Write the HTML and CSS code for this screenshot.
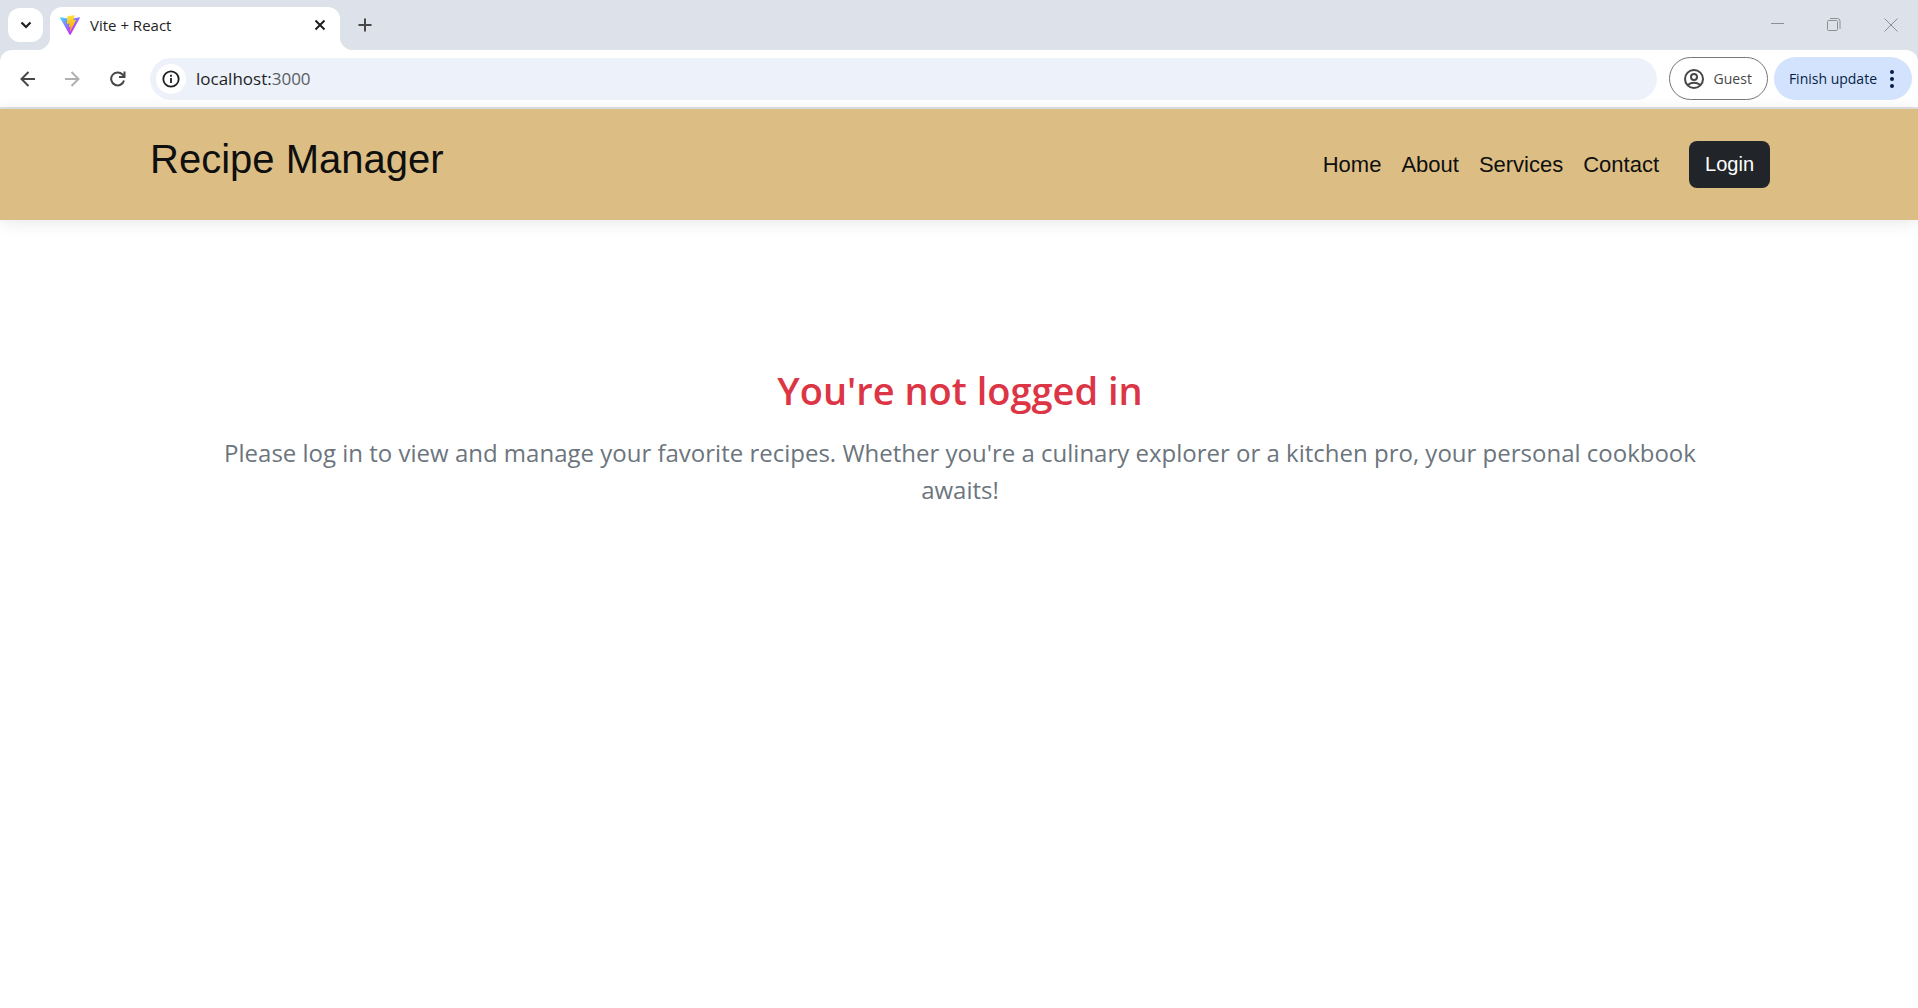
FILE: index.html
```html
<!DOCTYPE html>
<html lang="en">
<head>
<meta charset="utf-8">
<title>Vite + React</title>
<link rel="stylesheet" href="styles.css">
</head>
<body>
<div class="browser">
  <div class="tab-strip">
    <button class="tab-search" aria-label="Search tabs">
      <svg width="12" height="8" viewBox="0 0 12 8"><path d="M1.500 1.500 6 6l4.500-4.500" fill="none" stroke="#1f1f1f" stroke-width="2.200"/></svg>
    </button>
    <div class="tab">
      <svg class="favicon" width="20" height="20" viewBox="0 0 256 257">
        <defs>
          <linearGradient id="v" x1="0" x2="0.58" y1="0.080" y2="0.790"><stop offset="0" stop-color="#41d1ff"/><stop offset="1" stop-color="#bd34fe"/></linearGradient>
          <linearGradient id="b" x1="0.430" x2="0.500" y1="0.020" y2="0.890"><stop offset="0" stop-color="#ffea83"/><stop offset="0.080" stop-color="#ffdd35"/><stop offset="1" stop-color="#ffa800"/></linearGradient>
        </defs>
        <path fill="url(#v)" d="M255.153 37.938 134.897 252.976c-2.483 4.440-8.862 4.466-11.382.048L.875 37.958c-2.746-4.814 1.371-10.646 6.827-9.670l120.385 21.517a6.537 6.537 0 0 0 2.322-.004l117.867-21.483c5.438-.991 9.574 4.796 6.877 9.620Z"/>
        <path fill="url(#b)" d="M185.432.063 96.440 17.501a3.268 3.268 0 0 0-2.634 3.014l-5.474 92.456a3.268 3.268 0 0 0 3.997 3.378l24.777-5.718c2.318-.535 4.413 1.507 3.936 3.838l-7.361 36.047c-.495 2.426 1.782 4.500 4.151 3.780l15.304-4.649c2.372-.720 4.652 1.360 4.150 3.788l-11.698 56.621c-.732 3.542 3.979 5.473 5.943 2.437l1.313-2.028 72.516-144.720c1.215-2.423-.880-5.186-3.540-4.672l-25.505 4.922c-2.396.462-4.435-1.770-3.759-4.114l16.646-57.705c.677-2.350-1.370-4.583-3.769-4.113Z"/>
      </svg>
      <span class="tab-title">Vite + React</span>
      <button class="plain" aria-label="Close tab">
        <svg width="12" height="12" viewBox="0 0 12 12"><path d="m1.500 1.500 9 9m0-9-9 9" fill="none" stroke="#1f1f1f" stroke-width="2"/></svg>
      </button>
    </div>
    <button class="plain new-tab" aria-label="New tab">
      <svg width="14" height="14" viewBox="0 0 14 14"><path d="M7 .5v13M.5 7h13" fill="none" stroke="#474747" stroke-width="2"/></svg>
    </button>
    <div class="window-controls">
      <button class="plain" aria-label="Minimize"><svg width="14" height="14" viewBox="0 0 14 14"><path d="M1 5.500h13" stroke="#8d8f94"/></svg></button>
      <button class="plain" aria-label="Restore"><svg width="14" height="14" viewBox="0 0 14 14" fill="none" stroke="#8d8f94"><rect x=".5" y="2.500" width="10" height="10" rx="1"/><path d="M3 .5h7.500q2.500 0 2.500 2.500v8"/></svg></button>
      <button class="plain" aria-label="Close"><svg width="14" height="14" viewBox="0 0 14 14"><path d="m.5.5 13 13m0-13-13 13" stroke="#8d8f94"/></svg></button>
    </div>
  </div>
  <div class="toolbar">
    <div class="history">
      <button class="plain" aria-label="Back"><svg width="16" height="16" viewBox="0 0 16 16"><path d="M15 8H2m6.500-7L1.500 8l7 7" fill="none" stroke="#474747" stroke-width="2"/></svg></button>
      <button class="plain" aria-label="Forward"><svg width="16" height="16" viewBox="0 0 16 16"><path d="M0 8H13M6.500 1l7 7-7 7" fill="none" stroke="#b0b0b0" stroke-width="2"/></svg></button>
      <button class="plain" aria-label="Reload"><svg width="16" height="16" viewBox="0 0 16 16"><path d="M14 9.500a6.500 6.500 0 1 1-1.500-6L14.500 6M14.500.5V6H9" fill="none" stroke="#474747" stroke-width="2"/></svg></button>
    </div>
    <div class="address">
      <button class="site-info" aria-label="Site information"><svg width="18" height="18" viewBox="0 0 18 18"><circle cx="9" cy="9" r="7.700" fill="none" stroke="#1f1f1f" stroke-width="1.800"/><path d="M9 8v5M9 4.800v2" stroke="#1f1f1f" stroke-width="1.800"/></svg></button>
      <span class="url">localhost:<span class="port">3000</span></span>
    </div>
    <button class="pill guest"><svg width="20" height="20" viewBox="0 0 20 20" fill="none" stroke="#474747" stroke-width="2"><circle cx="10" cy="10" r="9"/><circle cx="10" cy="8" r="3"/><path d="M3.500 16q6.500-4.500 13 0"/></svg>Guest</button>
    <button class="pill update">Finish update<svg width="4" height="18" viewBox="0 0 4 18" fill="#041e49"><circle cx="2" cy="2" r="2"/><circle cx="2" cy="9" r="2"/><circle cx="2" cy="16" r="2"/></svg></button>
  </div>
</div>
<header class="site-header">
  <div class="container">
    <a class="brand" href="#">Recipe Manager</a>
    <nav class="site-nav">
      <a href="#">Home</a>
      <a href="#">About</a>
      <a href="#">Services</a>
      <a href="#">Contact</a>
      <button class="login">Login</button>
    </nav>
  </div>
</header>
<main class="notice">
  <h1>You're not logged in</h1>
  <p>Please log in to view and manage your favorite recipes. Whether you're a culinary explorer or a kitchen pro, your personal cookbook awaits!</p>
</main>
</body>
</html>
```
FILE: styles.css
```css
* { box-sizing: border-box; }

body {
  margin: 0;
  background: #fff;
  font-family: "Open Sans", "Noto Sans", sans-serif;
}

button {
  font: inherit;
  margin: 0;
  border: 0;
  padding: 0;
  cursor: pointer;
}

svg { display: block; flex: none; }

.plain { background: none; }

/* Browser window */
.browser {
  background: #dde2ea;
  border-bottom: 2px solid #dfe1e4;
}

.tab-strip {
  display: flex;
  align-items: center;
  height: 50px;
  padding-left: 8px;
}

.tab-search {
  display: grid;
  place-items: center;
  width: 35px;
  height: 34px;
  border-radius: 12px;
  background: #fff;
}

.tab {
  position: relative;
  display: flex;
  align-items: center;
  align-self: flex-end;
  width: 290px;
  height: 43px;
  margin-left: 7px;
  padding: 0 14px 7px 10px;
  border-radius: 12px 12px 0 0;
  background: #fff;
}

.tab::before,
.tab::after {
  content: "";
  position: absolute;
  bottom: 0;
  width: 14px;
  height: 14px;
}

.tab::before {
  right: 100%;
  background: radial-gradient(circle at 0 0, transparent 14px, #fff 15px);
}

.tab::after {
  left: 100%;
  background: radial-gradient(circle at 100% 0, transparent 14px, #fff 15px);
}

.tab-title {
  flex: 1;
  margin-left: 10px;
  font-size: 15px;
  color: #1f1f1f;
}

.new-tab { margin-left: 18px; }

.window-controls {
  display: flex;
  gap: 43px;
  margin-left: auto;
  padding-right: 20px;
}

.toolbar {
  display: flex;
  align-items: center;
  height: 57px;
  padding: 0 6px 0 20px;
  border-radius: 12px 12px 0 0;
  background: #fff;
}

.history {
  display: flex;
  gap: 29px;
  margin-right: 24px;
}

.address {
  display: flex;
  flex: 1;
  align-items: center;
  height: 42px;
  margin-right: 12px;
  padding-left: 6px;
  border-radius: 21px;
  background: #ecf1fa;
}

.site-info {
  display: grid;
  place-items: center;
  width: 30px;
  height: 30px;
  border-radius: 50%;
  background: #fff;
}

.url {
  margin-left: 10px;
  font-size: 17px;
  color: #1f1f1f;
}

.port { color: #5a5d61; }

.pill {
  display: flex;
  align-items: center;
  height: 43px;
  border-radius: 22px;
  font-size: 14px;
  white-space: nowrap;
}

.guest {
  gap: 10px;
  margin-right: 6px;
  padding: 0 15px 0 14px;
  border: 1px solid #747775;
  background: #fff;
  color: #474747;
}

.update {
  gap: 13px;
  padding: 0 18px 0 15px;
  background: #d3e3fd;
  color: #041e49;
}

/* Recipe Manager page */
.site-header {
  background: #dcbe85;
  box-shadow: 0 2px 16px rgba(0, 0, 0, 0.1);
  font-family: "Liberation Sans", Arial, sans-serif;
}

.container {
  display: flex;
  justify-content: space-between;
  align-items: flex-start;
  max-width: 1650px;
  margin: 0 auto;
  padding: 20px 14px 31px 16px;
}

.brand {
  font-size: 40px;
  line-height: 60px;
  color: #0f0f0f;
  text-decoration: none;
}

.site-nav {
  display: flex;
  align-items: center;
  gap: 20px;
  padding-top: 12px;
}

.site-nav a {
  font-size: 22px;
  color: #0f0f0f;
  text-decoration: none;
}

.login {
  height: 47px;
  margin-left: 10px;
  padding: 0 16px;
  border-radius: 8px;
  background: #212529;
  color: #fff;
  font-size: 20px;
}

.notice {
  max-width: 1650px;
  margin: 0 auto;
  padding: 140px 79px 140px 81px;
  text-align: center;
}

.notice h1 {
  margin: 0 0 14px;
  font-size: 38px;
  line-height: 60px;
  font-weight: 600;
  color: #dc3545;
}

.notice p {
  margin: 0;
  font-size: 24px;
  line-height: 37px;
  color: #6c757d;
}
```
